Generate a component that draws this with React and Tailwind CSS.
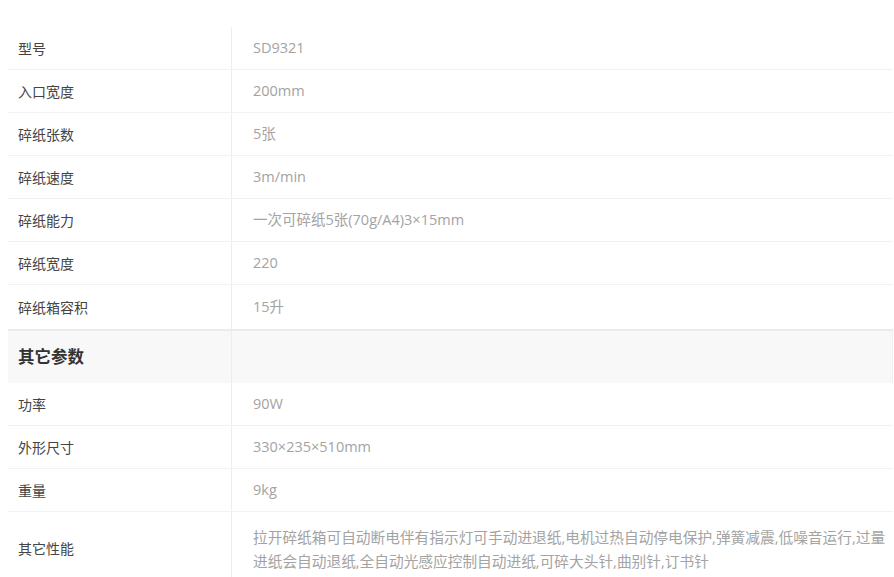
import React from 'react'

const groupA = [
  ['型号', 'SD9321'],
  ['入口宽度', '200mm'],
  ['碎纸张数', '5张'],
  ['碎纸速度', '3m/min'],
  ['碎纸能力', '一次可碎纸5张(70g/A4)3×15mm'],
  ['碎纸宽度', '220'],
  ['碎纸箱容积', '15升'],
]

const groupB = [
  ['功率', '90W'],
  ['外形尺寸', '330×235×510mm'],
  ['重量', '9kg'],
]

const FONT = { fontFamily: '"Open Sans", "Noto Sans CJK SC", sans-serif' }

function Row({ label, value, last }) {
  return (
    <div className={'flex ' + (last ? 'h-[46px] border-b-2 border-[#ebebeb]' : 'h-[43px] border-b border-[#f2f2f2]')}>
      <div className="w-[224px] shrink-0 flex items-center pl-[10px] text-[14px] text-[#444] border-r border-[#ededed]">
        {label}
      </div>
      <div className="flex-1 flex items-center pl-[21px] text-[14.5px] text-[#a3a3a3]">{value}</div>
    </div>
  )
}

export default function App() {
  return (
    <div className="bg-white w-[894px] h-[577px] overflow-hidden" style={FONT}>
      <div className="pt-[27px] pl-[8px] pr-[1px]">
        {groupA.map(([l, v], i) => (
          <Row key={l} label={l} value={v} last={i === groupA.length - 1} />
        ))}

        <div className="flex h-[52px] bg-[#f8f8f8] border-r border-[#efefef]">
          <div className="w-[224px] shrink-0 flex items-center pl-[10px] text-[16.5px] font-semibold text-[#333] border-r border-[#ededed]">
            其它参数
          </div>
          <div className="flex-1" />
        </div>

        {groupB.map(([l, v]) => (
          <Row key={l} label={l} value={v} />
        ))}

        <div className="flex h-[73px]">
          <div className="w-[224px] shrink-0 flex items-center pl-[10px] text-[14px] text-[#444] border-r border-[#ededed]">
            其它性能
          </div>
          <div className="flex-1 flex items-center pl-[21px] pr-[4px] text-[14.7px] leading-[24px] text-[#a3a3a3]">
            拉开碎纸箱可自动断电伴有指示灯可手动进退纸,电机过热自动停电保护,弹簧减震,低噪音运行,过量进纸会自动退纸,全自动光感应控制自动进纸,可碎大头针,曲别针,订书针
          </div>
        </div>
      </div>
    </div>
  )
}
